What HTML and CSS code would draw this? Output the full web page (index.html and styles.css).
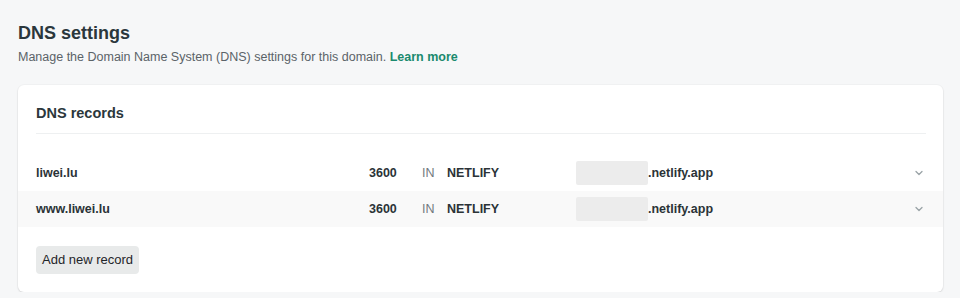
FILE: index.html
```html
<!DOCTYPE html>
<html lang="en">
<head>
    <meta charset="UTF-8">
    <title>DNS settings</title>
    <link rel="stylesheet" href="styles.css">
</head>
<body>
    <div class="page">
        <h1 class="title">DNS settings</h1>
        <p class="lead">Manage the Domain Name System (DNS) settings for this domain. <a href="#" class="link">Learn more</a></p>

        <div class="card">
            <h2 class="card-title">DNS records</h2>

            <div class="records">
                <div class="record">
                    <span class="rec-name">liwei.lu</span>
                    <span class="rec-ttl">3600</span>
                    <span class="rec-class">IN</span>
                    <span class="rec-type">NETLIFY</span>
                    <span class="rec-value"><span class="redacted"></span>.netlify.app</span>
                    <svg class="chevron" width="8" height="6" viewBox="0 0 8 6"><path d="M1 1.5l3 3 3-3" fill="none" stroke="#9aa3a7" stroke-width="1.3" stroke-linecap="round" stroke-linejoin="round"/></svg>
                </div>
                <div class="record alt">
                    <span class="rec-name">www.liwei.lu</span>
                    <span class="rec-ttl">3600</span>
                    <span class="rec-class">IN</span>
                    <span class="rec-type">NETLIFY</span>
                    <span class="rec-value"><span class="redacted"></span>.netlify.app</span>
                    <svg class="chevron" width="8" height="6" viewBox="0 0 8 6"><path d="M1 1.5l3 3 3-3" fill="none" stroke="#9aa3a7" stroke-width="1.3" stroke-linecap="round" stroke-linejoin="round"/></svg>
                </div>
            </div>

            <div class="card-actions">
                <button class="btn">Add new record</button>
            </div>
        </div>
    </div>
</body>
</html>
```

FILE: styles.css
```css
body {
    margin: 0;
    background: #f6f7f8;
    font-family: "Liberation Sans", Arial, sans-serif;
    color: #2b3337;
}
.page {
    padding: 20px 17px 0 18px;
}
.title {
    font-size: 18px;
    line-height: 26px;
    font-weight: 700;
    color: #2b373c;
    margin: 0;
}
.lead {
    font-size: 12.5px;
    line-height: 18px;
    color: #5b6368;
    margin: 2px 0 0;
}
.link {
    color: #1a8a6e;
    font-weight: 700;
    text-decoration: none;
}
.card {
    margin-top: 19px;
    background: #fff;
    border-radius: 6px;
    box-shadow: 0 1px 2px rgba(0, 0, 0, 0.12), 0 0 0 1px rgba(0, 0, 0, 0.02);
    padding: 16px 0 18px;
}
.card-title {
    font-size: 14.5px;
    line-height: 24px;
    font-weight: 700;
    color: #2b373c;
    margin: 0 17px 0 18px;
    padding-bottom: 8px;
    border-bottom: 1px solid #eef0f1;
}
.records {
    margin-top: 20px;
}
.record {
    display: grid;
    grid-template-columns: 333px 53px 25px 129px 1fr 8px;
    align-items: center;
    height: 37px;
    padding: 0 20px 0 18px;
    font-size: 12.5px;
    font-weight: 700;
    color: #2b3337;
}
.record.alt {
    height: 36px;
    background: #f9f9f9;
}
.rec-class {
    font-weight: 400;
    color: #727a7e;
}
.rec-value {
    display: flex;
    align-items: center;
}
.redacted {
    display: inline-block;
    width: 72px;
    height: 24px;
    background: #ececec;
    border-radius: 2px;
}
.chevron {
    display: block;
}
.card-actions {
    margin: 19px 18px 0;
}
.btn {
    font-family: "Liberation Sans", Arial, sans-serif;
    font-size: 13px;
    line-height: 20px;
    color: #1f2529;
    background: #e8eaea;
    border: 0;
    border-radius: 4px;
    padding: 4px 6px;
    cursor: pointer;
}
```
